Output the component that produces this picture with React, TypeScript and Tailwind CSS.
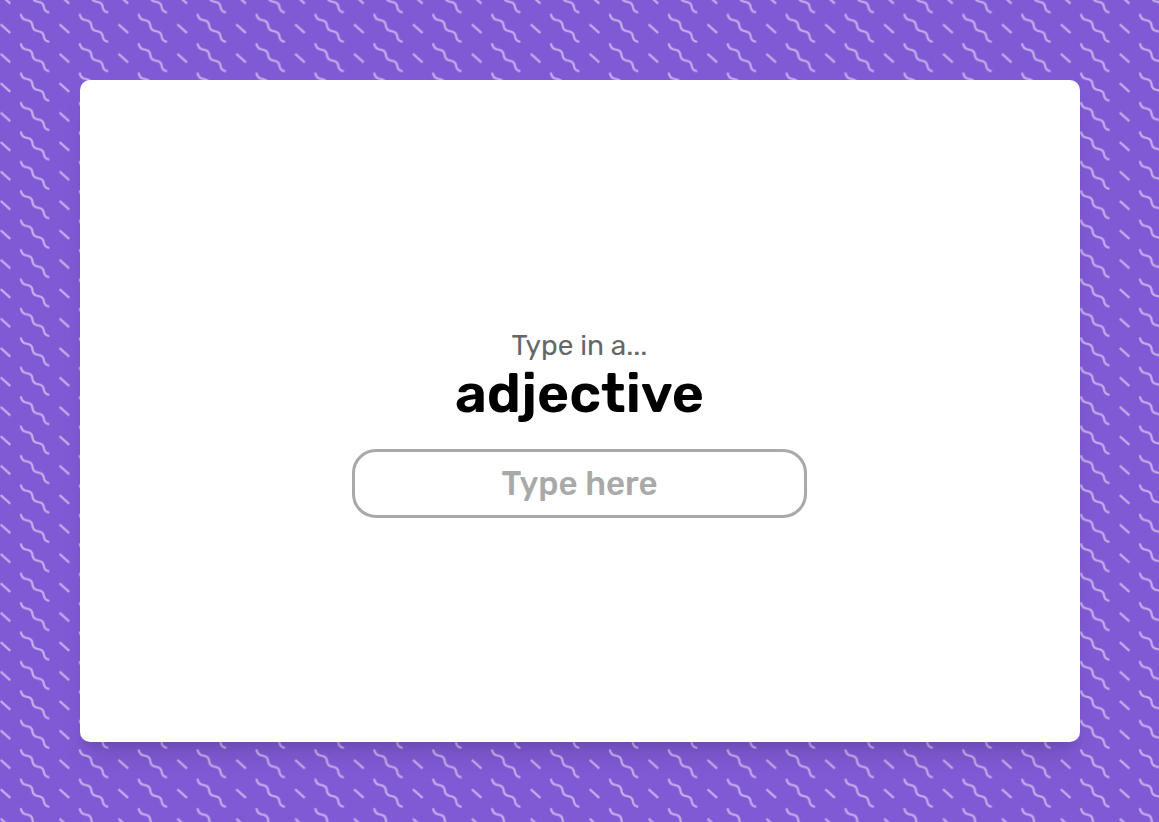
function Background() {
  return (
    <svg className="absolute inset-0 -z-10 h-full w-full" aria-hidden="true">
      <defs>
        <pattern id="squiggles" x="15" y="13.5" width="58.9" height="29.42" patternUnits="userSpaceOnUse">
          <g fill="none" stroke="#c3aceb" strokeWidth="2.3">
            <path d="M5.8 .4C6.2 4.8 8.2 6.3 12.2 6.8C16.2 7.3 17.3 9.3 17.5 12.4C17.8 15.8 19.6 17.3 23.4 17.7C27.2 18.1 28.6 20 28.9 23.2C29.3 26.2 30.8 28 34.3 28.3" />
            <path d="M44.6 10.9L54.2 19.5" />
          </g>
        </pattern>
      </defs>
      <rect width="100%" height="100%" fill="url(#squiggles)" />
    </svg>
  );
}

export default function App() {
  return (
    <div className="relative isolate flex min-h-screen justify-center bg-[#805ad5] py-20 font-['Rubik','Inter',sans-serif]">
      <Background />
      <main className="flex w-full max-w-[1000px] flex-col items-center justify-center rounded-[10px] bg-white px-4 pt-[25px] shadow-xl">
        <label htmlFor="word" className="flex flex-col items-center">
          <span className="text-[28px] leading-8 text-[#666]">Type in a...</span>
          <span className="text-[55px] leading-[64px] font-semibold text-black">adjective</span>
        </label>
        <input
          id="word"
          type="text"
          placeholder="Type here"
          className="mt-[23px] h-[69px] w-full max-w-[455px] rounded-3xl border-3 border-[#a9a9a9] text-center text-[33px] font-medium text-black outline-none placeholder:text-[#a9a9a9]"
        />
      </main>
    </div>
  );
}
